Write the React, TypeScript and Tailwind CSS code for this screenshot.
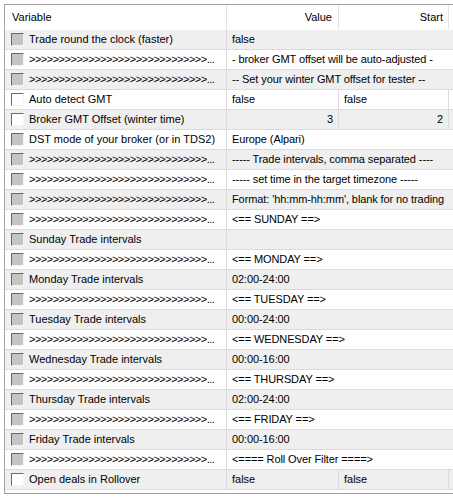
type Row = {
  name: string;
  value: string;
  start?: string;
  enabled?: boolean;
  numeric?: boolean;
  arrows?: boolean;
};

const ARROWS = '>'.repeat(30) + '...';

const rows: Row[] = [
  { name: 'Trade round the clock (faster)', value: 'false' },
  { name: ARROWS, arrows: true, value: '- broker GMT offset will be auto-adjusted -' },
  { name: ARROWS, arrows: true, value: '-- Set your winter GMT offset for tester --' },
  { name: 'Auto detect GMT', value: 'false', start: 'false', enabled: true },
  { name: 'Broker GMT Offset (winter time)', value: '3', start: '2', enabled: true, numeric: true },
  { name: 'DST mode of your broker (or in TDS2)', value: 'Europe (Alpari)' },
  { name: ARROWS, arrows: true, value: '----- Trade intervals, comma separated ----' },
  { name: ARROWS, arrows: true, value: '----- set time in the target timezone -----' },
  { name: ARROWS, arrows: true, value: "Format: 'hh:mm-hh:mm', blank for no trading" },
  { name: ARROWS, arrows: true, value: '<== SUNDAY ==>' },
  { name: 'Sunday Trade intervals', value: '' },
  { name: ARROWS, arrows: true, value: '<== MONDAY ==>' },
  { name: 'Monday Trade intervals', value: '02:00-24:00' },
  { name: ARROWS, arrows: true, value: '<== TUESDAY ==>' },
  { name: 'Tuesday Trade intervals', value: '00:00-24:00' },
  { name: ARROWS, arrows: true, value: '<== WEDNESDAY ==>' },
  { name: 'Wednesday Trade intervals', value: '00:00-16:00' },
  { name: ARROWS, arrows: true, value: '<== THURSDAY ==>' },
  { name: 'Thursday Trade intervals', value: '02:00-24:00' },
  { name: ARROWS, arrows: true, value: '<== FRIDAY ==>' },
  { name: 'Friday Trade intervals', value: '00:00-16:00' },
  { name: ARROWS, arrows: true, value: '<==== Roll Over Filter ====>' },
  { name: 'Open deals in Rollover', value: 'false', start: 'false', enabled: true },
];

function CheckBox({ enabled }: { enabled?: boolean }) {
  return (
    <div
      className={`w-[13px] h-[13px] shrink-0 border-t border-l border-[#6a6a6a] border-b border-r border-b-[#f4f4f4] border-r-[#f4f4f4] ${
        enabled ? 'bg-white' : 'bg-[#c4c4c4]'
      }`}
    />
  );
}

export default function App() {
  return (
    <div
      className="w-[453px] h-[504px] bg-white pt-[4px] pl-[4px] text-[11px] text-black"
      style={{ fontFamily: '"Liberation Sans", Arial, sans-serif' }}
    >
      <div className="w-[449px] h-[490px] border-t border-l border-b border-[#a3a3a3]">
        {/* header */}
        <div className="flex h-[25px]">
          <div className="w-[222px] border-r border-[#e3e3e3] flex items-center pl-[7px]">Variable</div>
          <div className="w-[112px] border-r border-[#e3e3e3] flex items-center justify-end pr-[6px]">Value</div>
          <div className="w-[110px] border-r border-[#e3e3e3] flex items-center justify-end pr-[5px]">Start</div>
        </div>

        {rows.map((r, i) => (
          <div
            key={i}
            className={`flex h-[20px] border-b border-[#dadada] ${i % 2 === 0 ? 'bg-[#efefef]' : 'bg-white'}`}
          >
            <div className="w-[222px] border-r border-[#dadada] flex items-center gap-[5px] pl-[6px] pr-[2px]">
              <CheckBox enabled={r.enabled} />
              <span className={`whitespace-nowrap ${r.arrows ? 'tracking-[-0.5px]' : ''}`}>{r.name}</span>
            </div>
            {r.start !== undefined ? (
              <>
                <div
                  className={`w-[112px] border-r border-[#dadada] flex items-center px-[5px] ${
                    r.numeric ? 'justify-end' : ''
                  }`}
                >
                  {r.value}
                </div>
                <div
                  className={`w-[110px] border-r border-[#dadada] flex items-center px-[5px] ${
                    r.numeric ? 'justify-end' : ''
                  }`}
                >
                  {r.start}
                </div>
              </>
            ) : (
              <div className="flex-1 flex items-center pl-[5px] whitespace-nowrap tracking-[-0.1px]">{r.value}</div>
            )}
          </div>
        ))}
      </div>
    </div>
  );
}
